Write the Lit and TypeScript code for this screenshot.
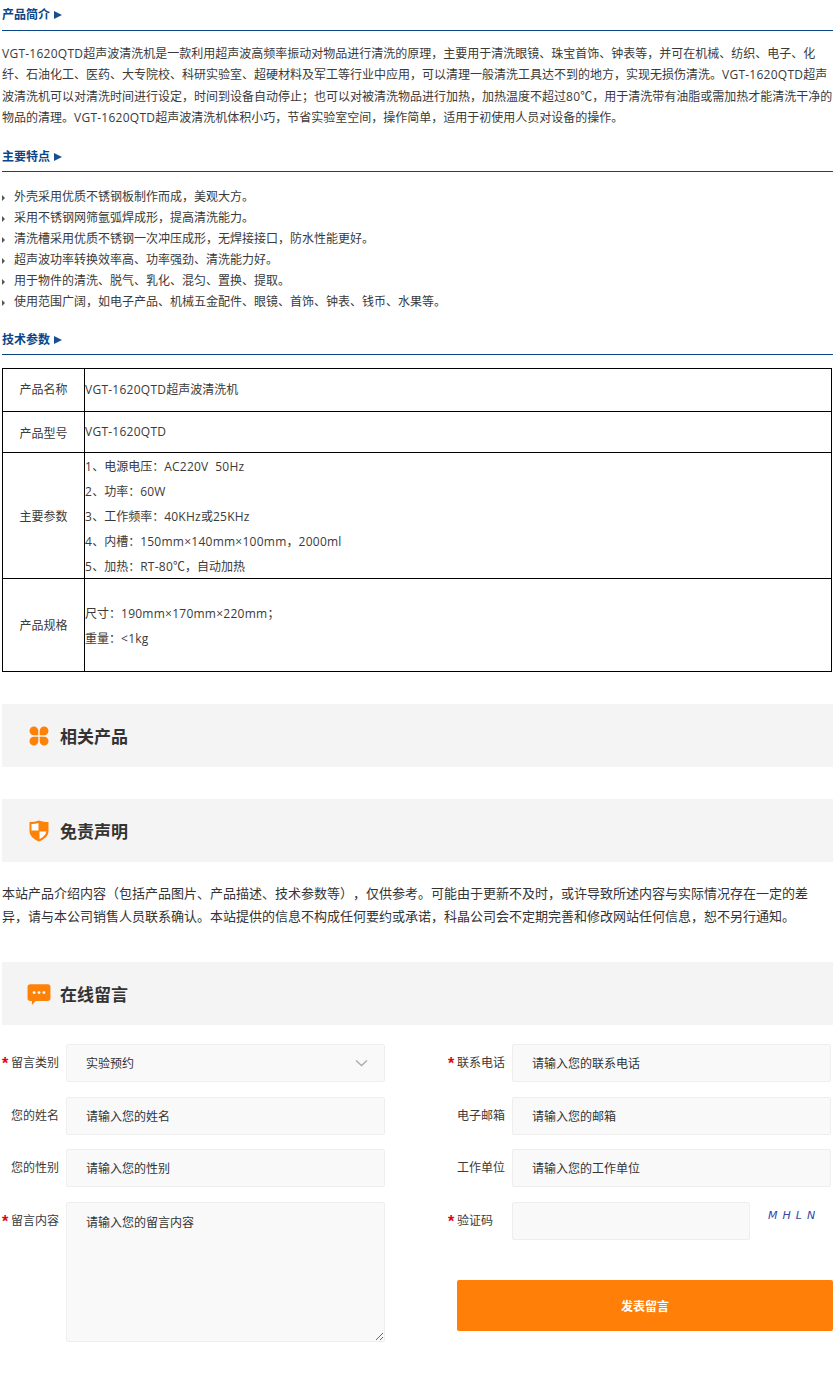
import { LitElement, html, css } from "lit";
import { customElement } from "lit/decorators.js";

const features = [
  "外壳采用优质不锈钢板制作而成，美观大方。",
  "采用不锈钢网筛氩弧焊成形，提高清洗能力。",
  "清洗槽采用优质不锈钢一次冲压成形，无焊接接口，防水性能更好。",
  "超声波功率转换效率高、功率强劲、清洗能力好。",
  "用于物件的清洗、脱气、乳化、混匀、置换、提取。",
  "使用范围广阔，如电子产品、机械五金配件、眼镜、首饰、钟表、钱币、水果等。",
];

const params = [
  "1、电源电压：AC220V  50Hz",
  "2、功率：60W",
  "3、工作频率：40KHz或25KHz",
  "4、内槽：150mm×140mm×100mm，2000ml",
  "5、加热：RT-80℃，自动加热",
];

const intro =
  "VGT-1620QTD超声波清洗机是一款利用超声波高频率振动对物品进行清洗的原理，主要用于清洗眼镜、珠宝首饰、钟表等，并可在机械、纺织、电子、化纤、石油化工、医药、大专院校、科研实验室、超硬材料及军工等行业中应用，可以清理一般清洗工具达不到的地方，实现无损伤清洗。VGT-1620QTD超声波清洗机可以对清洗时间进行设定，时间到设备自动停止；也可以对被清洗物品进行加热，加热温度不超过80℃，用于清洗带有油脂或需加热才能清洗干净的物品的清理。VGT-1620QTD超声波清洗机体积小巧，节省实验室空间，操作简单，适用于初使用人员对设备的操作。";

/* Wraps Latin runs so they get the wider latin face of the reference. */
function latin(text: string) {
  return text
    .split(/([A-Za-z0-9×<\-]+(?: +[A-Za-z0-9]+)*)/)
    .map((part, i) => (i % 2 ? html`<span class="l">${part}</span>` : part));
}

@customElement("app-root")
export class AppRoot extends LitElement {
  static styles = css`
    :host {
      display: block;
      width: 834px;
      min-height: 1400px;
      background: #fff;
      color: #3a3a3a;
      font-family: "Liberation Sans", "Noto Sans CJK SC", sans-serif;
      font-size: 12px;
      text-spacing-trim: space-all;
    }
    .l {
      font-family: "Open Sans", "Noto Sans CJK SC", sans-serif;
      letter-spacing: 0.25px;
      line-height: 0;
    }
    .page { padding-left: 2px; width: 831px; }
    .head {
      height: 30px;
      line-height: 30px;
      border-bottom: 1px solid #0c4587;
      color: #0c4587;
      font-weight: 700;
      display: flex;
      align-items: center;
      gap: 4px;
    }
    .lower { height: 28px; padding-top: 2px; }
    .head svg { width: 8px; height: 8px; }
    .intro { margin: 13px 0 12px; line-height: 21.33px; width: 831px; }
    .list { margin: 15px 0 11px; padding: 0; list-style: none; line-height: 21px; }
    .list li { display: flex; align-items: center; gap: 9px; white-space: pre; }
    .list svg { width: 3px; height: 6px; flex: none; }
    table {
      margin-top: 13px;
      border-collapse: collapse;
      width: 830px;
      table-layout: fixed;
    }
    td { border: 1px solid #000; padding: 0; color: #3a3a3a; }
    td.k { width: 81px; text-align: center; }
    .r1 { height: 43px; }
    .r1 td { padding-bottom: 3px; }
    .r2 { height: 41px; }
    .r3 { height: 126px; line-height: 25px; }
    .r3 td.k { padding-top: 4px; }
    .r4 { height: 93px; line-height: 25px; }
    .r4 td.k { padding-top: 2px; }
    .r4 td.v { padding-top: 4px; }
    .nudge { margin: 2px 0 -2px; }
    .v { white-space: pre; }
    .band {
      height: 63px;
      width: 831px;
      background: #f4f4f4;
      display: flex;
      align-items: center;
      gap: 10px;
      padding-left: 26px;
      box-sizing: border-box;
      font-size: 17px;
      font-weight: 700;
      color: #333;
    }
    .band svg { width: 22px; height: 22px; flex: none; }
    .b1 { margin-top: 32px; }
    .b2 { margin-top: 32px; }
    .b3 { margin-top: 34px; gap: 9px; }
    .chat { margin-left: -1px; }
    .band .chat { width: 24px; height: 24px; }
    .disc { margin: 20px 0 0; font-size: 13px; line-height: 23px; white-space: nowrap; color: #333; }
    form {
      display: flex;
      justify-content: space-between;
      margin-top: 19px;
      align-items: flex-start;
    }
    .col { display: flex; flex-direction: column; gap: 14.5px; }
    .left { width: 383px; }
    .right { width: 385px; }
    .row { display: flex; align-items: flex-start; gap: 6px; }
    label {
      width: 58px;
      height: 38px;
      line-height: 39px;
      flex: none;
      white-space: nowrap;
      display: flex;
    }
    .pad { padding-left: 9px; box-sizing: border-box; }
    .star {
      width: 9px;
      flex: none;
      color: #e60012;
      font-size: 16px;
      font-weight: 700;
      line-height: 40px;
    }
    input, textarea, select {
      box-sizing: border-box;
      border: 1px solid #eeeeee;
      border-radius: 2px;
      background: #f9f9f9;
      font: inherit;
      color: #333;
      padding: 2px 19px 0;
      height: 38px;
      width: 319px;
      outline: none;
      margin: 0;
    }
    input::placeholder, textarea::placeholder { color: #333; opacity: 1; }
    textarea { height: 140px; padding-top: 12px; line-height: 16px; display: block; }
    .selwrap { position: relative; width: 319px; height: 38px; }
    select { appearance: none; }
    .selwrap svg { position: absolute; right: 17px; top: 15px; width: 13px; height: 8px; }
    .code { width: 238px; }
    .captcha {
      margin-left: 12px;
      color: #3346a6;
      font-family: "DejaVu Sans", sans-serif;
      font-size: 11px;
      font-style: italic;
      letter-spacing: 5px;
      line-height: 27px;
      font-weight: 400;
    }
    .submit {
      margin: 25.5px 0 0 9px;
      width: 376px;
      height: 51px;
      border: 0;
      border-radius: 2px;
      background: #ff7f08;
      color: #fff;
      font: inherit;
      font-weight: 700;
      padding: 0;
    }
  `;

  private arrow() {
    return html`<svg viewBox="0 0 8 8"><polygon points="0,0 8,4 0,8" fill="#1a4f8f"></polygon></svg>`;
  }

  render() {
    return html`
      <div class="page">
        <div class="head">产品简介 ${this.arrow()}</div>
        <p class="intro">${latin(intro)}</p>
        <div class="head lower">主要特点 ${this.arrow()}</div>
        <ul class="list">
          ${features.map(
            (f) => html`<li><svg viewBox="0 0 3 6"><polygon points="0,0 3,3 0,6" fill="#555"></polygon></svg>${f}</li>`
          )}
        </ul>
        <div class="head lower">技术参数 ${this.arrow()}</div>
        <table>
          <tr class="r1"><td class="k">产品名称</td><td class="v">${latin("VGT-1620QTD超声波清洗机")}</td></tr>
          <tr class="r2"><td class="k">产品型号</td><td class="v">${latin("VGT-1620QTD")}</td></tr>
          <tr class="r3"><td class="k">主要参数</td><td class="v"><div class="nudge">${params.map((p) => html`<div>${latin(p)}</div>`)}</div></td></tr>
          <tr class="r4"><td class="k">产品规格</td><td class="v"><div>${latin("尺寸：190mm×170mm×220mm；")}</div><div>${latin("重量：<1kg")}</div></td></tr>
        </table>

        <div class="band b1">
          <svg viewBox="0 0 22 22">
            <g fill="#ff8208">
              <path d="M10.300 5.800 A4.400 4.400 0 1 0 5.800 10.300 H10.300Z"></path>
              <path d="M11.700 5.800 A4.400 4.400 0 1 1 16.200 10.300 H11.700Z"></path>
              <path d="M10.300 16.200 A4.400 4.400 0 1 1 5.800 11.700 H10.300Z"></path>
              <path d="M11.700 16.200 A4.400 4.400 0 1 0 16.200 11.700 H11.700Z"></path>
            </g>
          </svg>
          相关产品
        </div>
        <div class="band b2">
          <svg viewBox="0 0 22 22">
            <path d="M11 0.500 C7.500 1.800 4.500 2 1.500 2 V11 C1.500 16 6 19.500 11 21.500 C16 19.500 20.500 16 20.500 11 V2 C17.500 2 14.500 1.800 11 0.500Z" fill="#ff8208"></path>
            <path d="M10.500 3 C8 3.800 5.800 4 3.500 4.100 V10.500 H10.500Z" fill="#fff"></path>
            <path d="M11.500 11.500 H18.300 C17.800 15 14.800 17.500 11.500 19Z" fill="#fff"></path>
          </svg>
          免责声明
        </div>
        <p class="disc">本站产品介绍内容（包括产品图片、产品描述、技术参数等），仅供参考。可能由于更新不及时，或许导致所述内容与实际情况存在一定的差<br />异，请与本公司销售人员联系确认。本站提供的信息不构成任何要约或承诺，科晶公司会不定期完善和修改网站任何信息，恕不另行通知。</p>
        <div class="band b3">
          <svg class="chat" viewBox="0 0 22 22">
            <path d="M3 2 H19 A2.500 2.500 0 0 1 21.500 4.500 V15 A2.500 2.500 0 0 1 19 17.500 H8 L4.500 21 V17.500 H3 A2.500 2.500 0 0 1 0.500 15 V4.500 A2.500 2.500 0 0 1 3 2Z" fill="#ff8208"></path>
            <circle cx="6.500" cy="9.700" r="1.300" fill="#fff"></circle>
            <circle cx="11" cy="9.700" r="1.300" fill="#fff"></circle>
            <circle cx="15.500" cy="9.700" r="1.300" fill="#fff"></circle>
          </svg>
          在线留言
        </div>
        <form @submit=${(e: Event) => e.preventDefault()}>
          <div class="col left">
            <div class="row">
              <label><span class="star">*</span>留言类别</label>
              <div class="selwrap">
                <select><option>实验预约</option></select>
                <svg viewBox="0 0 13 8"><path d="M1 1.500 L6.500 6.500 L12 1.500" fill="none" stroke="#aaa" stroke-width="1.300"></path></svg>
              </div>
            </div>
            <div class="row"><label class="pad">您的姓名</label><input placeholder="请输入您的姓名" /></div>
            <div class="row"><label class="pad">您的性别</label><input placeholder="请输入您的性别" /></div>
            <div class="row"><label><span class="star">*</span>留言内容</label><textarea placeholder="请输入您的留言内容"></textarea></div>
          </div>
          <div class="col right">
            <div class="row"><label><span class="star">*</span>联系电话</label><input placeholder="请输入您的联系电话" /></div>
            <div class="row"><label class="pad">电子邮箱</label><input placeholder="请输入您的邮箱" /></div>
            <div class="row"><label class="pad">工作单位</label><input placeholder="请输入您的工作单位" /></div>
            <div class="row">
              <label><span class="star">*</span>验证码</label>
              <input class="code" />
              <span class="captcha">MHLN</span>
            </div>
            <button class="submit" type="submit">发表留言</button>
          </div>
        </form>
      </div>
    `;
  }
}
